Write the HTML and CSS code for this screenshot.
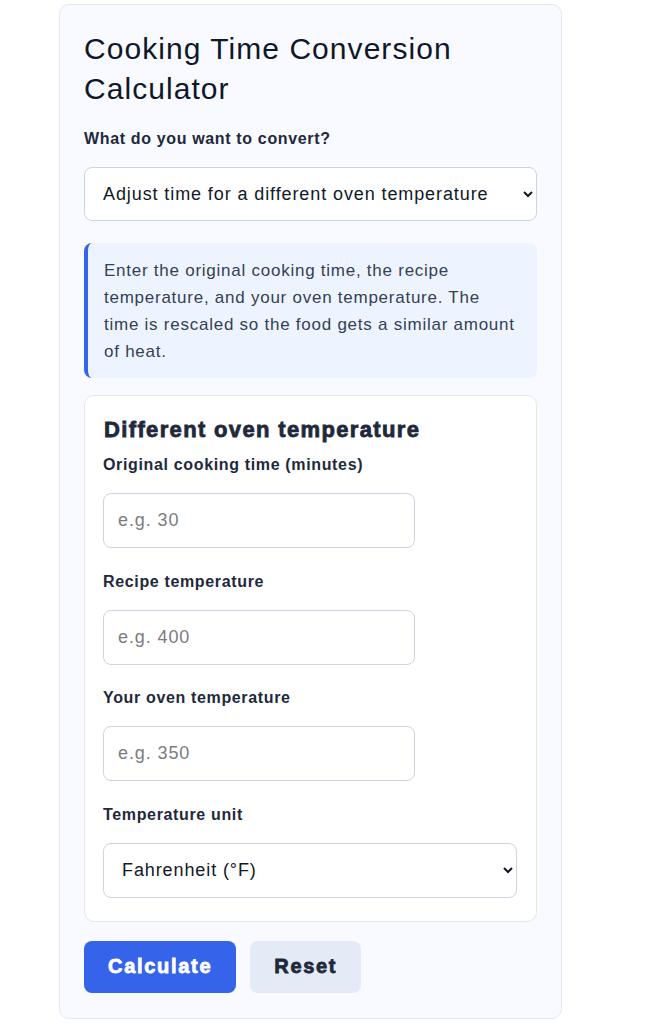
FILE: index.html
```html
<!DOCTYPE html>
<html>
<head>
  <meta charset="utf-8">
  <meta name="viewport" content="width=device-width">
  <title>Cooking Time Conversion Calculator</title>
  <link rel="stylesheet" href="styles.css">
</head>
<body>
  <div class="card">
    <h1>Cooking Time Conversion Calculator</h1>

    <label class="lbl" for="mode">What do you want to convert?</label>
    <select id="mode" class="sel top">
      <option>Adjust time for a different oven temperature</option>
    </select>

    <div class="note">
      Enter the original cooking time, the recipe temperature, and your oven temperature. The time is rescaled so the food gets a similar amount of heat.
    </div>

    <div class="panel">
      <h2>Different oven temperature</h2>

      <div class="field">
        <label class="lbl" for="t0">Original cooking time (minutes)</label>
        <input id="t0" class="inp" type="text" placeholder="e.g. 30">
      </div>
      <div class="field">
        <label class="lbl" for="r0">Recipe temperature</label>
        <input id="r0" class="inp" type="text" placeholder="e.g. 400">
      </div>
      <div class="field">
        <label class="lbl" for="r1">Your oven temperature</label>
        <input id="r1" class="inp" type="text" placeholder="e.g. 350">
      </div>
      <div class="field">
        <label class="lbl" for="unit">Temperature unit</label>
        <select id="unit" class="sel">
          <option>Fahrenheit (°F)</option>
          <option>Celsius (°C)</option>
        </select>
      </div>
    </div>

    <div class="actions">
      <button class="btn primary">Calculate</button>
      <button class="btn ghost">Reset</button>
    </div>
  </div>
</body>
</html>
```

FILE: styles.css
```css
body {
  margin: 0;
  padding: 4px 0 0 59px;
  background: #fff;
  font-family: "Liberation Sans", Arial, sans-serif;
  color: #1e293b;
}

.card {
  width: 503px;
  box-sizing: border-box;
  padding: 24px 24px 25px;
  background: #f8faff;
  border: 1px solid #e2e8f0;
  border-radius: 10px;
}

h1 {
  margin: 0 0 20px;
  font-size: 30px;
  font-weight: normal;
  line-height: 40px;
  letter-spacing: 1.05px;
  color: #0f172a;
}

.lbl {
  display: block;
  margin-bottom: 19px;
  font-size: 16px;
  font-weight: bold;
  line-height: 19px;
  letter-spacing: 0.65px;
  color: #1e293b;
}

.sel,
.inp {
  display: block;
  box-sizing: border-box;
  height: 55px;
  font-family: inherit;
  font-size: 18px;
  letter-spacing: 0.9px;
  color: #111827;
  background: #fff;
  border: 1px solid #cbd5e1;
  border-radius: 8px;
}

.sel {
  width: 100%;
  padding: 0 6px 0 14px;
}

.sel.top {
  height: 54px;
}

.inp {
  width: 312px;
  padding: 0 14px;
}

.inp::placeholder {
  color: #7c7c7c;
}

.note {
  margin-top: 22px;
  padding: 14px 20px 13px 16px;
  background: #eef4ff;
  border-left: 4px solid #3563e9;
  border-radius: 8px;
  font-size: 17px;
  line-height: 27px;
  letter-spacing: 0.75px;
  color: #334155;
}

.panel {
  margin-top: 17px;
  padding: 21px 19px 23px 18px;
  background: #fff;
  border: 1px solid #e2e8f0;
  border-radius: 10px;
}

.panel h2 {
  margin-left: 1px;
}

h2 {
  margin: 0 0 13px;
  font-size: 22px;
  line-height: 25px;
  font-weight: bold;
  letter-spacing: 1.35px;
  color: #1e293b;
  -webkit-text-stroke: 0.8px #1e293b;
}

.field + .field {
  margin-top: 23.5px;
}

.actions {
  display: flex;
  gap: 14px;
  margin-top: 19px;
}

.btn {
  height: 52px;
  padding: 0 24px;
  border: none;
  border-radius: 8px;
  font-family: inherit;
  font-size: 20px;
  font-weight: bold;
  letter-spacing: 1.7px;
  -webkit-text-stroke: 0.8px currentColor;
}

.primary {
  background: #3563e9;
  color: #fff;
}

.ghost {
  background: #e5ebf6;
  color: #1e293b;
}
```
